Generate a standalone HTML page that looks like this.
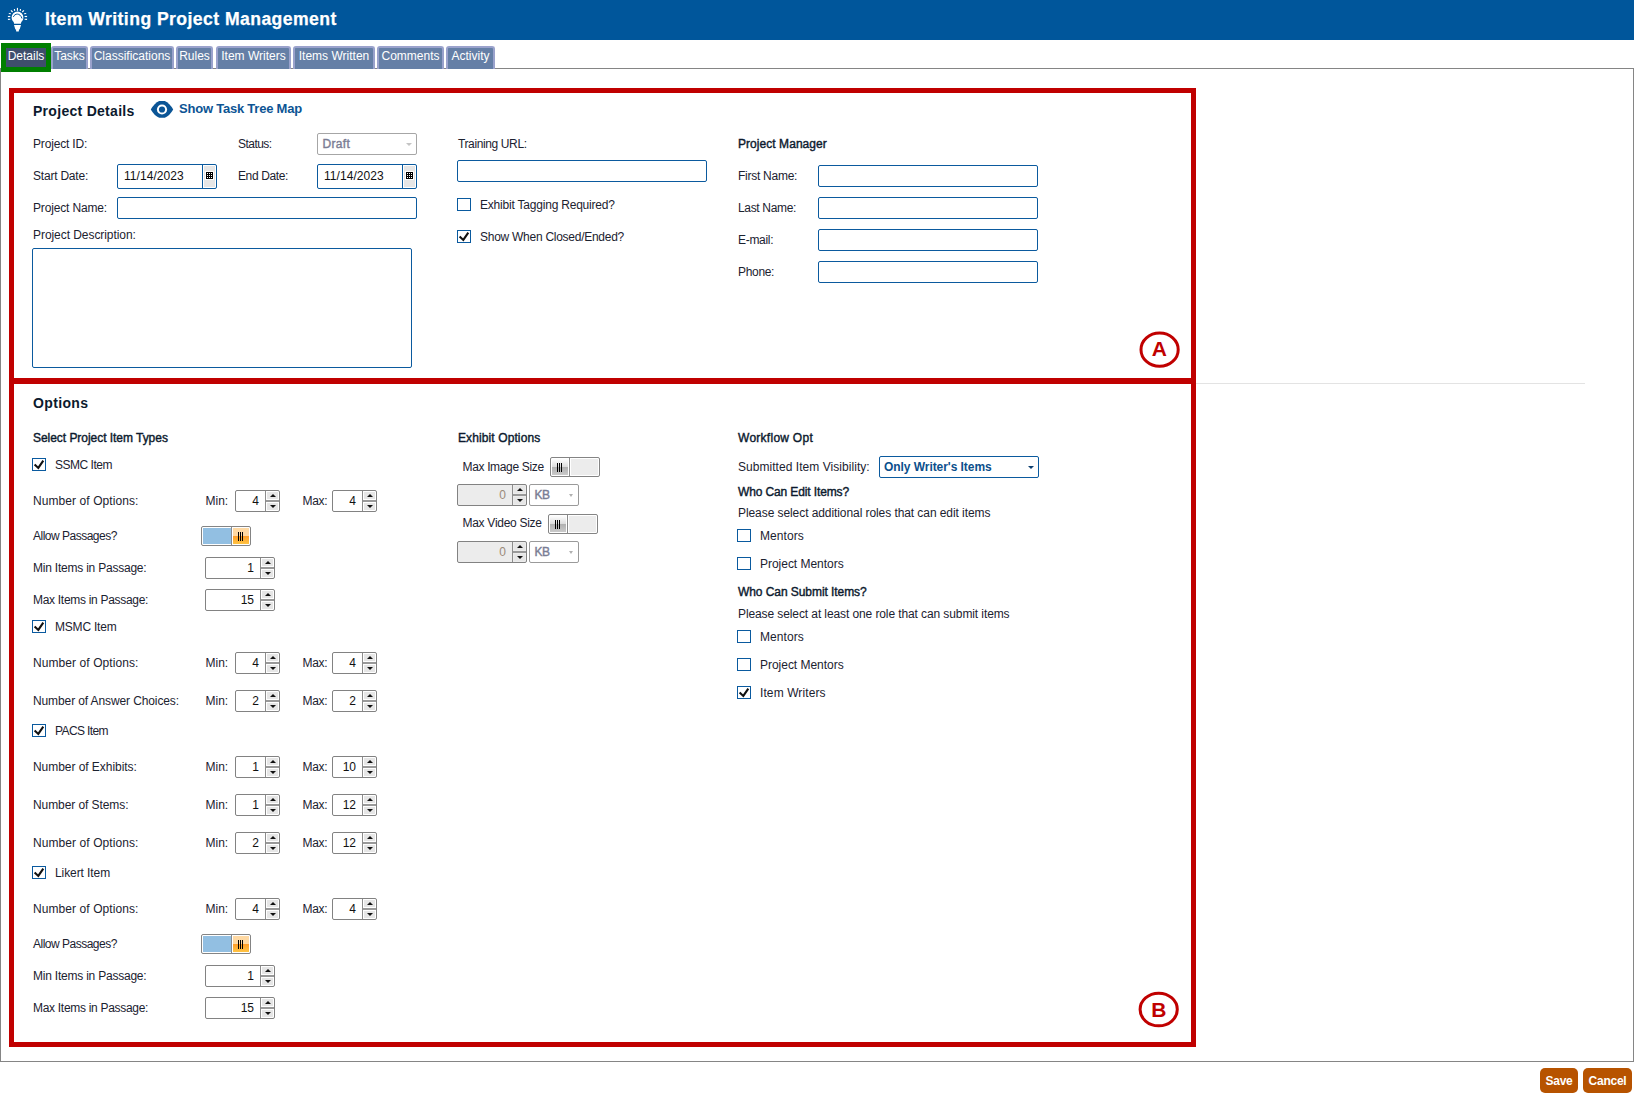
<!DOCTYPE html><html><head><meta charset="utf-8"><title>Item Writing Project Management</title><style>
*{margin:0;padding:0}
html,body{width:1638px;height:1098px;overflow:hidden;background:#fff}
body{position:relative;font-family:"Liberation Sans",sans-serif;color:#1b2230}
.t{position:absolute;white-space:nowrap;letter-spacing:-0.18px}
.b{position:absolute}
.cb{position:absolute;width:14px;height:13px;box-sizing:border-box;border:1px solid #0a5a9f;background:#fff}
.sp{position:absolute;height:22px;box-sizing:border-box;border:1px solid #828282;border-radius:2px}
.spv{position:absolute;top:3px;font-size:12px;line-height:14px}
.spsep{position:absolute;right:13px;top:0;width:1px;height:20px;background:#8c8c8c}
.spu,.spd{position:absolute;right:1px;width:11px;height:7px;background:#e6e6e6}
.spu{top:1px}.spd{top:12px}
.sph{position:absolute;right:0;top:9px;width:13px;height:2px;background:#999}
.au,.ad{position:absolute;left:2.5px;width:0;height:0;border-left:3px solid transparent;border-right:3px solid transparent}
.au{top:2px;border-bottom:3.5px solid #111}
.ad{top:1.5px;border-top:3.5px solid #111}
.tg{position:absolute;width:50px;height:20px;box-sizing:border-box;border:1px solid #848484;border-radius:2px;background:#fff}
.thumb{position:absolute;top:1px;width:16px;height:16px}
.thumb.on{background:linear-gradient(#ffd9a3 0,#ffd9a3 50%,#ff9d2a 50%,#ffc443 100%)}
.thumb.off{background:linear-gradient(#fdfdfd 0,#dcdcdc 50%,#b0b0b0 50%,#cacaca 100%)}
.thumb i{position:absolute;top:4px;width:1px;height:9px;background:#000}
.tab{position:absolute;top:46px;height:23px;box-sizing:border-box;border:2px solid #9aa2cc;border-bottom:none;border-radius:3px 3px 0 0;background:#657fa6;color:#fff;font-size:12px;line-height:17px;text-align:center;white-space:nowrap}
.btn{position:absolute;top:1068px;height:25px;border-radius:5px;background:#b75300;color:#fff;font-weight:700;font-size:12px;line-height:27px;text-align:center;letter-spacing:-0.25px}
</style></head><body>
<div class="b" style="left:0px;top:0px;width:1634px;height:40px;background:#00569b;"></div>
<svg class="b" style="left:0;top:0" width="40" height="40" viewBox="0 0 40 40">
<path d="M17.5 11.6 a5.9 5.9 0 0 1 5.9 5.9 c0 2.2-1.2 3.4-2.1 4.6 l-0.4 1.7 h-6.8 l-0.4-1.7 c-0.9-1.2-2.1-2.4-2.1-4.6 a5.9 5.9 0 0 1 5.9-5.9z" fill="#fff"/>
<path d="M14 25 h7 l-1.3 4.3 -0.8 0.4 v1.3 c0 0.4-0.3 0.6-0.7 0.6 h-1.4 c-0.4 0-0.7-0.2-0.7-0.6 v-1.3 l-0.8-0.4z" fill="#fff"/>
<path d="M13.4 16.9 c1.2-3.6 6.8-4.4 8.6 1.6" fill="none" stroke="#00569b" stroke-width="1"/>
<g stroke="#fff" stroke-width="1.15" stroke-linecap="butt">
<line x1="17.45" y1="7.9" x2="17.45" y2="10.8"/>
<line x1="14.4" y1="9" x2="14.7" y2="10.8"/>
<line x1="20.5" y1="9" x2="20.2" y2="10.8"/>
<line x1="11" y1="10.3" x2="12.6" y2="12"/>
<line x1="23.9" y1="10.3" x2="22.3" y2="12"/>
<line x1="8.8" y1="13.5" x2="10.9" y2="13.7"/>
<line x1="26.2" y1="13.5" x2="24.1" y2="13.7"/>
<line x1="7.9" y1="16.5" x2="10.3" y2="16.5"/>
<line x1="27.1" y1="16.5" x2="24.6" y2="16.5"/>
<line x1="7.9" y1="19.4" x2="10.3" y2="19.3"/>
<line x1="27.1" y1="19.4" x2="24.6" y2="19.3"/>
</g></svg>
<div class="t" style="left:45px;top:9.00px;font-size:17.6px;line-height:21px;font-weight:700;color:#fff;letter-spacing:0.436px;-webkit-text-stroke:0.25px #fff;">Item Writing Project Management</div>
<div class="b" style="left:0px;top:68px;width:1634px;height:994px;box-sizing:border-box;border:1px solid #858585;border-top:1px solid #858585;"></div>
<div class="b" style="left:1px;top:43px;width:50px;height:29px;box-sizing:border-box;border:5px solid #007f00;background:#3e4e6c;color:#fff;font-size:12px;line-height:17px;text-align:center">Details</div>
<div class="tab" style="left:51px;width:37px">Tasks</div>
<div class="tab" style="left:90px;width:84px">Classifications</div>
<div class="tab" style="left:176px;width:37px">Rules</div>
<div class="tab" style="left:216px;width:75px">Item Writers</div>
<div class="tab" style="left:293px;width:82px">Items Written</div>
<div class="tab" style="left:377px;width:67px">Comments</div>
<div class="tab" style="left:446px;width:49px">Activity</div>
<div class="b" style="left:9px;top:88px;width:1187px;height:296px;box-sizing:border-box;border:5px solid #c00000;"></div>
<div class="b" style="left:9px;top:378px;width:1187px;height:669px;box-sizing:border-box;border:5px solid #c00000;"></div>
<div class="b" style="left:1196px;top:383px;width:389px;height:1px;background:#e3e3e3;"></div>
<div class="t" style="left:33px;top:103.25px;font-size:14px;line-height:17px;font-weight:700;color:#0c1a2e;letter-spacing:0.287px;">Project Details</div>
<svg class="b" style="left:145px;top:96px" width="35" height="26" viewBox="145 96 35 26">
<path d="M150.8 109.5 Q154.5 103 159.2 101 H164.8 Q169.5 103 173.2 109.5 Q169.5 116 164.8 117.8 H159.2 Q154.5 116 150.8 109.5Z" fill="#0b5596"/>
<circle cx="162" cy="109.5" r="5.1" fill="#fff"/><circle cx="162" cy="109.5" r="3.1" fill="#0b5596"/>
</svg>
<div class="t" style="left:179px;top:101.30px;font-size:13px;line-height:16px;font-weight:700;color:#0c5494;letter-spacing:-0.222px;">Show Task Tree Map</div>
<div class="t" style="left:33px;top:136.84px;font-size:12px;line-height:14px;letter-spacing:-0.168px;">Project ID:</div>
<div class="t" style="left:238px;top:136.84px;font-size:12px;line-height:14px;letter-spacing:-0.537px;">Status:</div>
<div class="b" style="left:317px;top:133px;width:100px;height:22px;box-sizing:border-box;border:1px solid #a6a6a6;border-radius:2px;"></div>
<div class="t" style="left:322.5px;top:136.84px;font-size:12px;line-height:14px;color:#7a7d94;letter-spacing:0.308px;-webkit-text-stroke:0.4px #7a7d94;">Draft</div>
<div class="b" style="left:406px;top:143px;width:0;height:0;border-left:3px solid transparent;border-right:3px solid transparent;border-top:3px solid #c4c4c4"></div>
<div class="t" style="left:33px;top:168.84px;font-size:12px;line-height:14px;letter-spacing:-0.212px;">Start Date:</div>
<div class="t" style="left:238px;top:168.84px;font-size:12px;line-height:14px;letter-spacing:-0.379px;">End Date:</div>
<div class="b" style="left:117px;top:164px;width:100px;height:25px;box-sizing:border-box;border:1px solid #0b5a9e;border-radius:2px;"></div>
<div class="b" style="left:202px;top:165px;width:1px;height:23px;background:#0b5a9e;"></div>
<div class="b" style="left:204px;top:166px;width:11px;height:21px;background:#e6e6e6;"></div>
<svg class="b" style="left:205px;top:171px" width="9" height="9" viewBox="0 0 9 9"><rect width="9" height="9" fill="#fff"/><rect x="1" y="1" width="7" height="7" fill="#000"/><g fill="#fff"><rect x="2" y="2" width="1" height="1"/><rect x="2" y="4" width="1" height="1"/><rect x="2" y="6" width="1" height="1"/><rect x="4" y="2" width="1" height="1"/><rect x="4" y="4" width="1" height="1"/><rect x="4" y="6" width="1" height="1"/><rect x="6" y="2" width="1" height="1"/><rect x="6" y="4" width="1" height="1"/><rect x="6" y="6" width="1" height="1"/></g></svg>
<div class="t" style="left:124px;top:168.84px;font-size:12px;line-height:14px;color:#111;letter-spacing:0.056px;">11/14/2023</div>
<div class="b" style="left:317px;top:164px;width:100px;height:25px;box-sizing:border-box;border:1px solid #0b5a9e;border-radius:2px;"></div>
<div class="b" style="left:402px;top:165px;width:1px;height:23px;background:#0b5a9e;"></div>
<div class="b" style="left:404px;top:166px;width:11px;height:21px;background:#e6e6e6;"></div>
<svg class="b" style="left:405px;top:171px" width="9" height="9" viewBox="0 0 9 9"><rect width="9" height="9" fill="#fff"/><rect x="1" y="1" width="7" height="7" fill="#000"/><g fill="#fff"><rect x="2" y="2" width="1" height="1"/><rect x="2" y="4" width="1" height="1"/><rect x="2" y="6" width="1" height="1"/><rect x="4" y="2" width="1" height="1"/><rect x="4" y="4" width="1" height="1"/><rect x="4" y="6" width="1" height="1"/><rect x="6" y="2" width="1" height="1"/><rect x="6" y="4" width="1" height="1"/><rect x="6" y="6" width="1" height="1"/></g></svg>
<div class="t" style="left:324px;top:168.84px;font-size:12px;line-height:14px;color:#111;letter-spacing:0.056px;">11/14/2023</div>
<div class="t" style="left:33px;top:200.84px;font-size:12px;line-height:14px;letter-spacing:-0.158px;">Project Name:</div>
<div class="b" style="left:117px;top:197px;width:300px;height:22px;border:1px solid #0b5a9e;border-radius:2px;background:#fff;box-sizing:border-box;"></div>
<div class="t" style="left:33px;top:227.84px;font-size:12px;line-height:14px;letter-spacing:-0.058px;">Project Description:</div>
<div class="b" style="left:32px;top:248px;width:380px;height:120px;box-sizing:border-box;border:1px solid #0b5a9e;border-radius:2px;"></div>
<div class="t" style="left:458px;top:136.54px;font-size:12px;line-height:14px;letter-spacing:-0.379px;">Training URL:</div>
<div class="b" style="left:457px;top:160px;width:250px;height:22px;border:1px solid #0b5a9e;border-radius:2px;background:#fff;box-sizing:border-box;"></div>
<div class="cb" style="left:457px;top:198px"></div>
<div class="t" style="left:480px;top:197.64px;font-size:12px;line-height:14px;letter-spacing:-0.205px;">Exhibit Tagging Required?</div>
<div class="cb" style="left:457px;top:230px"><svg width="14" height="13" viewBox="0 0 14 13" style="position:absolute;left:-1px;top:-1px"><path d="M2.6 6.5 L6.3 9.9 L11.3 2.6" fill="none" stroke="#111" stroke-width="2.1" stroke-linejoin="miter" stroke-linecap="butt"/></svg></div>
<div class="t" style="left:480px;top:229.54px;font-size:12px;line-height:14px;letter-spacing:-0.265px;">Show When Closed/Ended?</div>
<div class="t" style="left:738px;top:137.34px;font-size:12px;line-height:14px;color:#0c1a2e;letter-spacing:0.054px;-webkit-text-stroke:0.4px #0c1a2e;">Project Manager</div>
<div class="t" style="left:738px;top:168.84px;font-size:12px;line-height:14px;letter-spacing:-0.257px;">First Name:</div>
<div class="b" style="left:818px;top:165px;width:220px;height:22px;border:1px solid #0b5a9e;border-radius:2px;background:#fff;box-sizing:border-box;"></div>
<div class="t" style="left:738px;top:200.84px;font-size:12px;line-height:14px;letter-spacing:-0.336px;">Last Name:</div>
<div class="b" style="left:818px;top:197px;width:220px;height:22px;border:1px solid #0b5a9e;border-radius:2px;background:#fff;box-sizing:border-box;"></div>
<div class="t" style="left:738px;top:232.84px;font-size:12px;line-height:14px;letter-spacing:-0.3px;">E-mail:</div>
<div class="b" style="left:818px;top:229px;width:220px;height:22px;border:1px solid #0b5a9e;border-radius:2px;background:#fff;box-sizing:border-box;"></div>
<div class="t" style="left:738px;top:264.84px;font-size:12px;line-height:14px;letter-spacing:-0.32px;">Phone:</div>
<div class="b" style="left:818px;top:261px;width:220px;height:22px;border:1px solid #0b5a9e;border-radius:2px;background:#fff;box-sizing:border-box;"></div>
<svg class="b" style="left:1136px;top:328px" width="48" height="44" viewBox="0 0 48 44">
<ellipse cx="23.6" cy="21.7" rx="18.6" ry="16.6" fill="none" stroke="#c00000" stroke-width="3"/>
</svg>
<div class="t" style="left:1151.8px;top:336.42px;font-size:21px;line-height:25px;font-weight:700;color:#c00000;letter-spacing:0px;">A</div>
<div class="t" style="left:33px;top:394.85px;font-size:14px;line-height:17px;font-weight:700;color:#0c1a2e;letter-spacing:0.351px;">Options</div>
<div class="t" style="left:33px;top:431.14px;font-size:12px;line-height:14px;color:#0c1a2e;letter-spacing:-0.04px;-webkit-text-stroke:0.4px #0c1a2e;">Select Project Item Types</div>
<div class="cb" style="left:32px;top:458px"><svg width="14" height="13" viewBox="0 0 14 13" style="position:absolute;left:-1px;top:-1px"><path d="M2.6 6.5 L6.3 9.9 L11.3 2.6" fill="none" stroke="#111" stroke-width="2.1" stroke-linejoin="miter" stroke-linecap="butt"/></svg></div>
<div class="t" style="left:55px;top:457.84px;font-size:12px;line-height:14px;letter-spacing:-0.481px;">SSMC Item</div>
<div class="t" style="left:33px;top:493.84px;font-size:12px;line-height:14px;letter-spacing:0.082px;">Number of Options:</div>
<div class="t" style="left:205.5px;top:493.84px;font-size:12px;line-height:14px;letter-spacing:-0.012px;">Min:</div>
<div class="sp" style="left:235px;top:490px;width:45px;background:#fff"><div class="spv" style="right:20px;color:#111">4</div><div class="spsep"></div><div class="spu"><i class="au"></i></div><div class="sph"></div><div class="spd"><i class="ad"></i></div></div>
<div class="t" style="left:302.5px;top:493.84px;font-size:12px;line-height:14px;letter-spacing:-0.29px;">Max:</div>
<div class="sp" style="left:332px;top:490px;width:45px;background:#fff"><div class="spv" style="right:20px;color:#111">4</div><div class="spsep"></div><div class="spu"><i class="au"></i></div><div class="sph"></div><div class="spd"><i class="ad"></i></div></div>
<div class="t" style="left:33px;top:528.84px;font-size:12px;line-height:14px;letter-spacing:-0.501px;">Allow Passages?</div>
<div class="tg" style="left:201px;top:526px"><div style="position:absolute;left:1px;top:1px;width:28px;height:16px;background:#92bfe2"></div><div style="position:absolute;left:29px;top:0;width:1px;height:18px;background:#8a8a8a"></div><div class="thumb on" style="left:31px"><i style="left:5px"></i><i style="left:7px"></i><i style="left:9px"></i></div></div>
<div class="t" style="left:33px;top:560.84px;font-size:12px;line-height:14px;letter-spacing:-0.221px;">Min Items in Passage:</div>
<div class="sp" style="left:205px;top:557px;width:70px;background:#fff"><div class="spv" style="right:20px;color:#111">1</div><div class="spsep"></div><div class="spu"><i class="au"></i></div><div class="sph"></div><div class="spd"><i class="ad"></i></div></div>
<div class="t" style="left:33px;top:592.84px;font-size:12px;line-height:14px;letter-spacing:-0.297px;">Max Items in Passage:</div>
<div class="sp" style="left:205px;top:589px;width:70px;background:#fff"><div class="spv" style="right:20px;color:#111">15</div><div class="spsep"></div><div class="spu"><i class="au"></i></div><div class="sph"></div><div class="spd"><i class="ad"></i></div></div>
<div class="cb" style="left:32px;top:620px"><svg width="14" height="13" viewBox="0 0 14 13" style="position:absolute;left:-1px;top:-1px"><path d="M2.6 6.5 L6.3 9.9 L11.3 2.6" fill="none" stroke="#111" stroke-width="2.1" stroke-linejoin="miter" stroke-linecap="butt"/></svg></div>
<div class="t" style="left:55px;top:619.84px;font-size:12px;line-height:14px;letter-spacing:-0.205px;">MSMC Item</div>
<div class="t" style="left:33px;top:655.84px;font-size:12px;line-height:14px;letter-spacing:0.082px;">Number of Options:</div>
<div class="t" style="left:205.5px;top:655.84px;font-size:12px;line-height:14px;letter-spacing:-0.012px;">Min:</div>
<div class="sp" style="left:235px;top:652px;width:45px;background:#fff"><div class="spv" style="right:20px;color:#111">4</div><div class="spsep"></div><div class="spu"><i class="au"></i></div><div class="sph"></div><div class="spd"><i class="ad"></i></div></div>
<div class="t" style="left:302.5px;top:655.84px;font-size:12px;line-height:14px;letter-spacing:-0.29px;">Max:</div>
<div class="sp" style="left:332px;top:652px;width:45px;background:#fff"><div class="spv" style="right:20px;color:#111">4</div><div class="spsep"></div><div class="spu"><i class="au"></i></div><div class="sph"></div><div class="spd"><i class="ad"></i></div></div>
<div class="t" style="left:33px;top:693.84px;font-size:12px;line-height:14px;letter-spacing:-0.111px;">Number of Answer Choices:</div>
<div class="t" style="left:205.5px;top:693.84px;font-size:12px;line-height:14px;letter-spacing:-0.012px;">Min:</div>
<div class="sp" style="left:235px;top:690px;width:45px;background:#fff"><div class="spv" style="right:20px;color:#111">2</div><div class="spsep"></div><div class="spu"><i class="au"></i></div><div class="sph"></div><div class="spd"><i class="ad"></i></div></div>
<div class="t" style="left:302.5px;top:693.84px;font-size:12px;line-height:14px;letter-spacing:-0.29px;">Max:</div>
<div class="sp" style="left:332px;top:690px;width:45px;background:#fff"><div class="spv" style="right:20px;color:#111">2</div><div class="spsep"></div><div class="spu"><i class="au"></i></div><div class="sph"></div><div class="spd"><i class="ad"></i></div></div>
<div class="cb" style="left:32px;top:724px"><svg width="14" height="13" viewBox="0 0 14 13" style="position:absolute;left:-1px;top:-1px"><path d="M2.6 6.5 L6.3 9.9 L11.3 2.6" fill="none" stroke="#111" stroke-width="2.1" stroke-linejoin="miter" stroke-linecap="butt"/></svg></div>
<div class="t" style="left:55px;top:723.84px;font-size:12px;line-height:14px;letter-spacing:-0.608px;">PACS Item</div>
<div class="t" style="left:33px;top:759.84px;font-size:12px;line-height:14px;letter-spacing:-0.049px;">Number of Exhibits:</div>
<div class="t" style="left:205.5px;top:759.84px;font-size:12px;line-height:14px;letter-spacing:-0.012px;">Min:</div>
<div class="sp" style="left:235px;top:756px;width:45px;background:#fff"><div class="spv" style="right:20px;color:#111">1</div><div class="spsep"></div><div class="spu"><i class="au"></i></div><div class="sph"></div><div class="spd"><i class="ad"></i></div></div>
<div class="t" style="left:302.5px;top:759.84px;font-size:12px;line-height:14px;letter-spacing:-0.29px;">Max:</div>
<div class="sp" style="left:332px;top:756px;width:45px;background:#fff"><div class="spv" style="right:20px;color:#111">10</div><div class="spsep"></div><div class="spu"><i class="au"></i></div><div class="sph"></div><div class="spd"><i class="ad"></i></div></div>
<div class="t" style="left:33px;top:797.84px;font-size:12px;line-height:14px;letter-spacing:-0.078px;">Number of Stems:</div>
<div class="t" style="left:205.5px;top:797.84px;font-size:12px;line-height:14px;letter-spacing:-0.012px;">Min:</div>
<div class="sp" style="left:235px;top:794px;width:45px;background:#fff"><div class="spv" style="right:20px;color:#111">1</div><div class="spsep"></div><div class="spu"><i class="au"></i></div><div class="sph"></div><div class="spd"><i class="ad"></i></div></div>
<div class="t" style="left:302.5px;top:797.84px;font-size:12px;line-height:14px;letter-spacing:-0.29px;">Max:</div>
<div class="sp" style="left:332px;top:794px;width:45px;background:#fff"><div class="spv" style="right:20px;color:#111">12</div><div class="spsep"></div><div class="spu"><i class="au"></i></div><div class="sph"></div><div class="spd"><i class="ad"></i></div></div>
<div class="t" style="left:33px;top:835.84px;font-size:12px;line-height:14px;letter-spacing:0.082px;">Number of Options:</div>
<div class="t" style="left:205.5px;top:835.84px;font-size:12px;line-height:14px;letter-spacing:-0.012px;">Min:</div>
<div class="sp" style="left:235px;top:832px;width:45px;background:#fff"><div class="spv" style="right:20px;color:#111">2</div><div class="spsep"></div><div class="spu"><i class="au"></i></div><div class="sph"></div><div class="spd"><i class="ad"></i></div></div>
<div class="t" style="left:302.5px;top:835.84px;font-size:12px;line-height:14px;letter-spacing:-0.29px;">Max:</div>
<div class="sp" style="left:332px;top:832px;width:45px;background:#fff"><div class="spv" style="right:20px;color:#111">12</div><div class="spsep"></div><div class="spu"><i class="au"></i></div><div class="sph"></div><div class="spd"><i class="ad"></i></div></div>
<div class="cb" style="left:32px;top:866px"><svg width="14" height="13" viewBox="0 0 14 13" style="position:absolute;left:-1px;top:-1px"><path d="M2.6 6.5 L6.3 9.9 L11.3 2.6" fill="none" stroke="#111" stroke-width="2.1" stroke-linejoin="miter" stroke-linecap="butt"/></svg></div>
<div class="t" style="left:55px;top:865.84px;font-size:12px;line-height:14px;letter-spacing:-0.082px;">Likert Item</div>
<div class="t" style="left:33px;top:901.84px;font-size:12px;line-height:14px;letter-spacing:0.082px;">Number of Options:</div>
<div class="t" style="left:205.5px;top:901.84px;font-size:12px;line-height:14px;letter-spacing:-0.012px;">Min:</div>
<div class="sp" style="left:235px;top:898px;width:45px;background:#fff"><div class="spv" style="right:20px;color:#111">4</div><div class="spsep"></div><div class="spu"><i class="au"></i></div><div class="sph"></div><div class="spd"><i class="ad"></i></div></div>
<div class="t" style="left:302.5px;top:901.84px;font-size:12px;line-height:14px;letter-spacing:-0.29px;">Max:</div>
<div class="sp" style="left:332px;top:898px;width:45px;background:#fff"><div class="spv" style="right:20px;color:#111">4</div><div class="spsep"></div><div class="spu"><i class="au"></i></div><div class="sph"></div><div class="spd"><i class="ad"></i></div></div>
<div class="t" style="left:33px;top:936.84px;font-size:12px;line-height:14px;letter-spacing:-0.501px;">Allow Passages?</div>
<div class="tg" style="left:201px;top:934px"><div style="position:absolute;left:1px;top:1px;width:28px;height:16px;background:#92bfe2"></div><div style="position:absolute;left:29px;top:0;width:1px;height:18px;background:#8a8a8a"></div><div class="thumb on" style="left:31px"><i style="left:5px"></i><i style="left:7px"></i><i style="left:9px"></i></div></div>
<div class="t" style="left:33px;top:968.84px;font-size:12px;line-height:14px;letter-spacing:-0.221px;">Min Items in Passage:</div>
<div class="sp" style="left:205px;top:965px;width:70px;background:#fff"><div class="spv" style="right:20px;color:#111">1</div><div class="spsep"></div><div class="spu"><i class="au"></i></div><div class="sph"></div><div class="spd"><i class="ad"></i></div></div>
<div class="t" style="left:33px;top:1000.84px;font-size:12px;line-height:14px;letter-spacing:-0.297px;">Max Items in Passage:</div>
<div class="sp" style="left:205px;top:997px;width:70px;background:#fff"><div class="spv" style="right:20px;color:#111">15</div><div class="spsep"></div><div class="spu"><i class="au"></i></div><div class="sph"></div><div class="spd"><i class="ad"></i></div></div>
<div class="t" style="left:458px;top:430.84px;font-size:12px;line-height:14px;color:#0c1a2e;letter-spacing:0.107px;-webkit-text-stroke:0.4px #0c1a2e;">Exhibit Options</div>
<div class="t" style="left:462.5px;top:460.34px;font-size:12px;line-height:14px;letter-spacing:-0.343px;">Max Image Size</div>
<div class="tg" style="left:550px;top:457px"><div class="thumb off" style="left:1px"><i style="left:5px"></i><i style="left:7px"></i><i style="left:9px"></i></div><div style="position:absolute;left:18px;top:0;width:1px;height:18px;background:#8a8a8a"></div><div style="position:absolute;left:20px;top:1px;width:27px;height:16px;background:#ececec"></div></div>
<div class="sp" style="left:457px;top:484px;width:70px;background:#ececec"><div class="spv" style="right:20px;color:#9a8a7a">0</div><div class="spsep"></div><div class="spu"><i class="au"></i></div><div class="sph"></div><div class="spd"><i class="ad"></i></div></div>
<div class="b" style="left:529px;top:484px;width:50px;height:22px;box-sizing:border-box;border:1px solid #9a9a9a;border-radius:2px;background:#fff;"></div>
<div class="t" style="left:534.5px;top:487.84px;font-size:12px;line-height:14px;color:#7a7d94;letter-spacing:-0.4px;-webkit-text-stroke:0.4px #7a7d94;">KB</div>
<div class="b" style="left:569px;top:494px;width:0;height:0;border-left:2.5px solid transparent;border-right:2.5px solid transparent;border-top:3px solid #b0b0b0"></div>
<div class="t" style="left:462.5px;top:516.24px;font-size:12px;line-height:14px;letter-spacing:-0.283px;">Max Video Size</div>
<div class="tg" style="left:548px;top:514px"><div class="thumb off" style="left:1px"><i style="left:5px"></i><i style="left:7px"></i><i style="left:9px"></i></div><div style="position:absolute;left:18px;top:0;width:1px;height:18px;background:#8a8a8a"></div><div style="position:absolute;left:20px;top:1px;width:27px;height:16px;background:#ececec"></div></div>
<div class="sp" style="left:457px;top:541px;width:70px;background:#ececec"><div class="spv" style="right:20px;color:#9a8a7a">0</div><div class="spsep"></div><div class="spu"><i class="au"></i></div><div class="sph"></div><div class="spd"><i class="ad"></i></div></div>
<div class="b" style="left:529px;top:541px;width:50px;height:22px;box-sizing:border-box;border:1px solid #9a9a9a;border-radius:2px;background:#fff;"></div>
<div class="t" style="left:534.5px;top:544.84px;font-size:12px;line-height:14px;color:#7a7d94;letter-spacing:-0.4px;-webkit-text-stroke:0.4px #7a7d94;">KB</div>
<div class="b" style="left:569px;top:551px;width:0;height:0;border-left:2.5px solid transparent;border-right:2.5px solid transparent;border-top:3px solid #b0b0b0"></div>
<div class="t" style="left:738px;top:430.84px;font-size:12px;line-height:14px;color:#0c1a2e;letter-spacing:0.267px;-webkit-text-stroke:0.4px #0c1a2e;">Workflow Opt</div>
<div class="t" style="left:738px;top:460.04px;font-size:12px;line-height:14px;letter-spacing:0.046px;">Submitted Item Visibility:</div>
<div class="b" style="left:879px;top:456px;width:160px;height:22px;box-sizing:border-box;border:1px solid #0b5a9e;border-radius:2px;background:#fff;"></div>
<div class="t" style="left:884px;top:460.04px;font-size:12px;line-height:14px;font-weight:700;color:#0c4f8c;letter-spacing:-0.055px;">Only Writer&#39;s Items</div>
<div class="b" style="left:1028px;top:466px;width:0;height:0;border-left:3px solid transparent;border-right:3px solid transparent;border-top:3px solid #0c3f70"></div>
<div class="t" style="left:738px;top:484.54px;font-size:12px;line-height:14px;color:#0c1a2e;letter-spacing:-0.123px;-webkit-text-stroke:0.4px #0c1a2e;">Who Can Edit Items?</div>
<div class="t" style="left:738px;top:505.84px;font-size:12px;line-height:14px;letter-spacing:-0.076px;">Please select additional roles that can edit items</div>
<div class="cb" style="left:737px;top:529px"></div>
<div class="t" style="left:760px;top:529.34px;font-size:12px;line-height:14px;letter-spacing:0.059px;">Mentors</div>
<div class="cb" style="left:737px;top:557px"></div>
<div class="t" style="left:760px;top:556.84px;font-size:12px;line-height:14px;letter-spacing:-0.024px;">Project Mentors</div>
<div class="t" style="left:738px;top:585.14px;font-size:12px;line-height:14px;color:#0c1a2e;letter-spacing:-0.069px;-webkit-text-stroke:0.4px #0c1a2e;">Who Can Submit Items?</div>
<div class="t" style="left:738px;top:606.54px;font-size:12px;line-height:14px;letter-spacing:-0.1px;">Please select at least one role that can submit items</div>
<div class="cb" style="left:737px;top:630px"></div>
<div class="t" style="left:760px;top:629.84px;font-size:12px;line-height:14px;letter-spacing:0.059px;">Mentors</div>
<div class="cb" style="left:737px;top:658px"></div>
<div class="t" style="left:760px;top:657.54px;font-size:12px;line-height:14px;letter-spacing:-0.024px;">Project Mentors</div>
<div class="cb" style="left:737px;top:686px"><svg width="14" height="13" viewBox="0 0 14 13" style="position:absolute;left:-1px;top:-1px"><path d="M2.6 6.5 L6.3 9.9 L11.3 2.6" fill="none" stroke="#111" stroke-width="2.1" stroke-linejoin="miter" stroke-linecap="butt"/></svg></div>
<div class="t" style="left:760px;top:685.54px;font-size:12px;line-height:14px;letter-spacing:0.096px;">Item Writers</div>
<svg class="b" style="left:1135px;top:988px" width="48" height="44" viewBox="0 0 48 44">
<ellipse cx="23.7" cy="21.5" rx="18.6" ry="16.3" fill="none" stroke="#c00000" stroke-width="3"/>
</svg>
<div class="t" style="left:1151.2px;top:997.12px;font-size:21px;line-height:25px;font-weight:700;color:#c00000;letter-spacing:0px;">B</div>
<div class="btn" style="left:1540px;width:38px">Save</div>
<div class="btn" style="left:1583px;width:49px">Cancel</div>
</body></html>
